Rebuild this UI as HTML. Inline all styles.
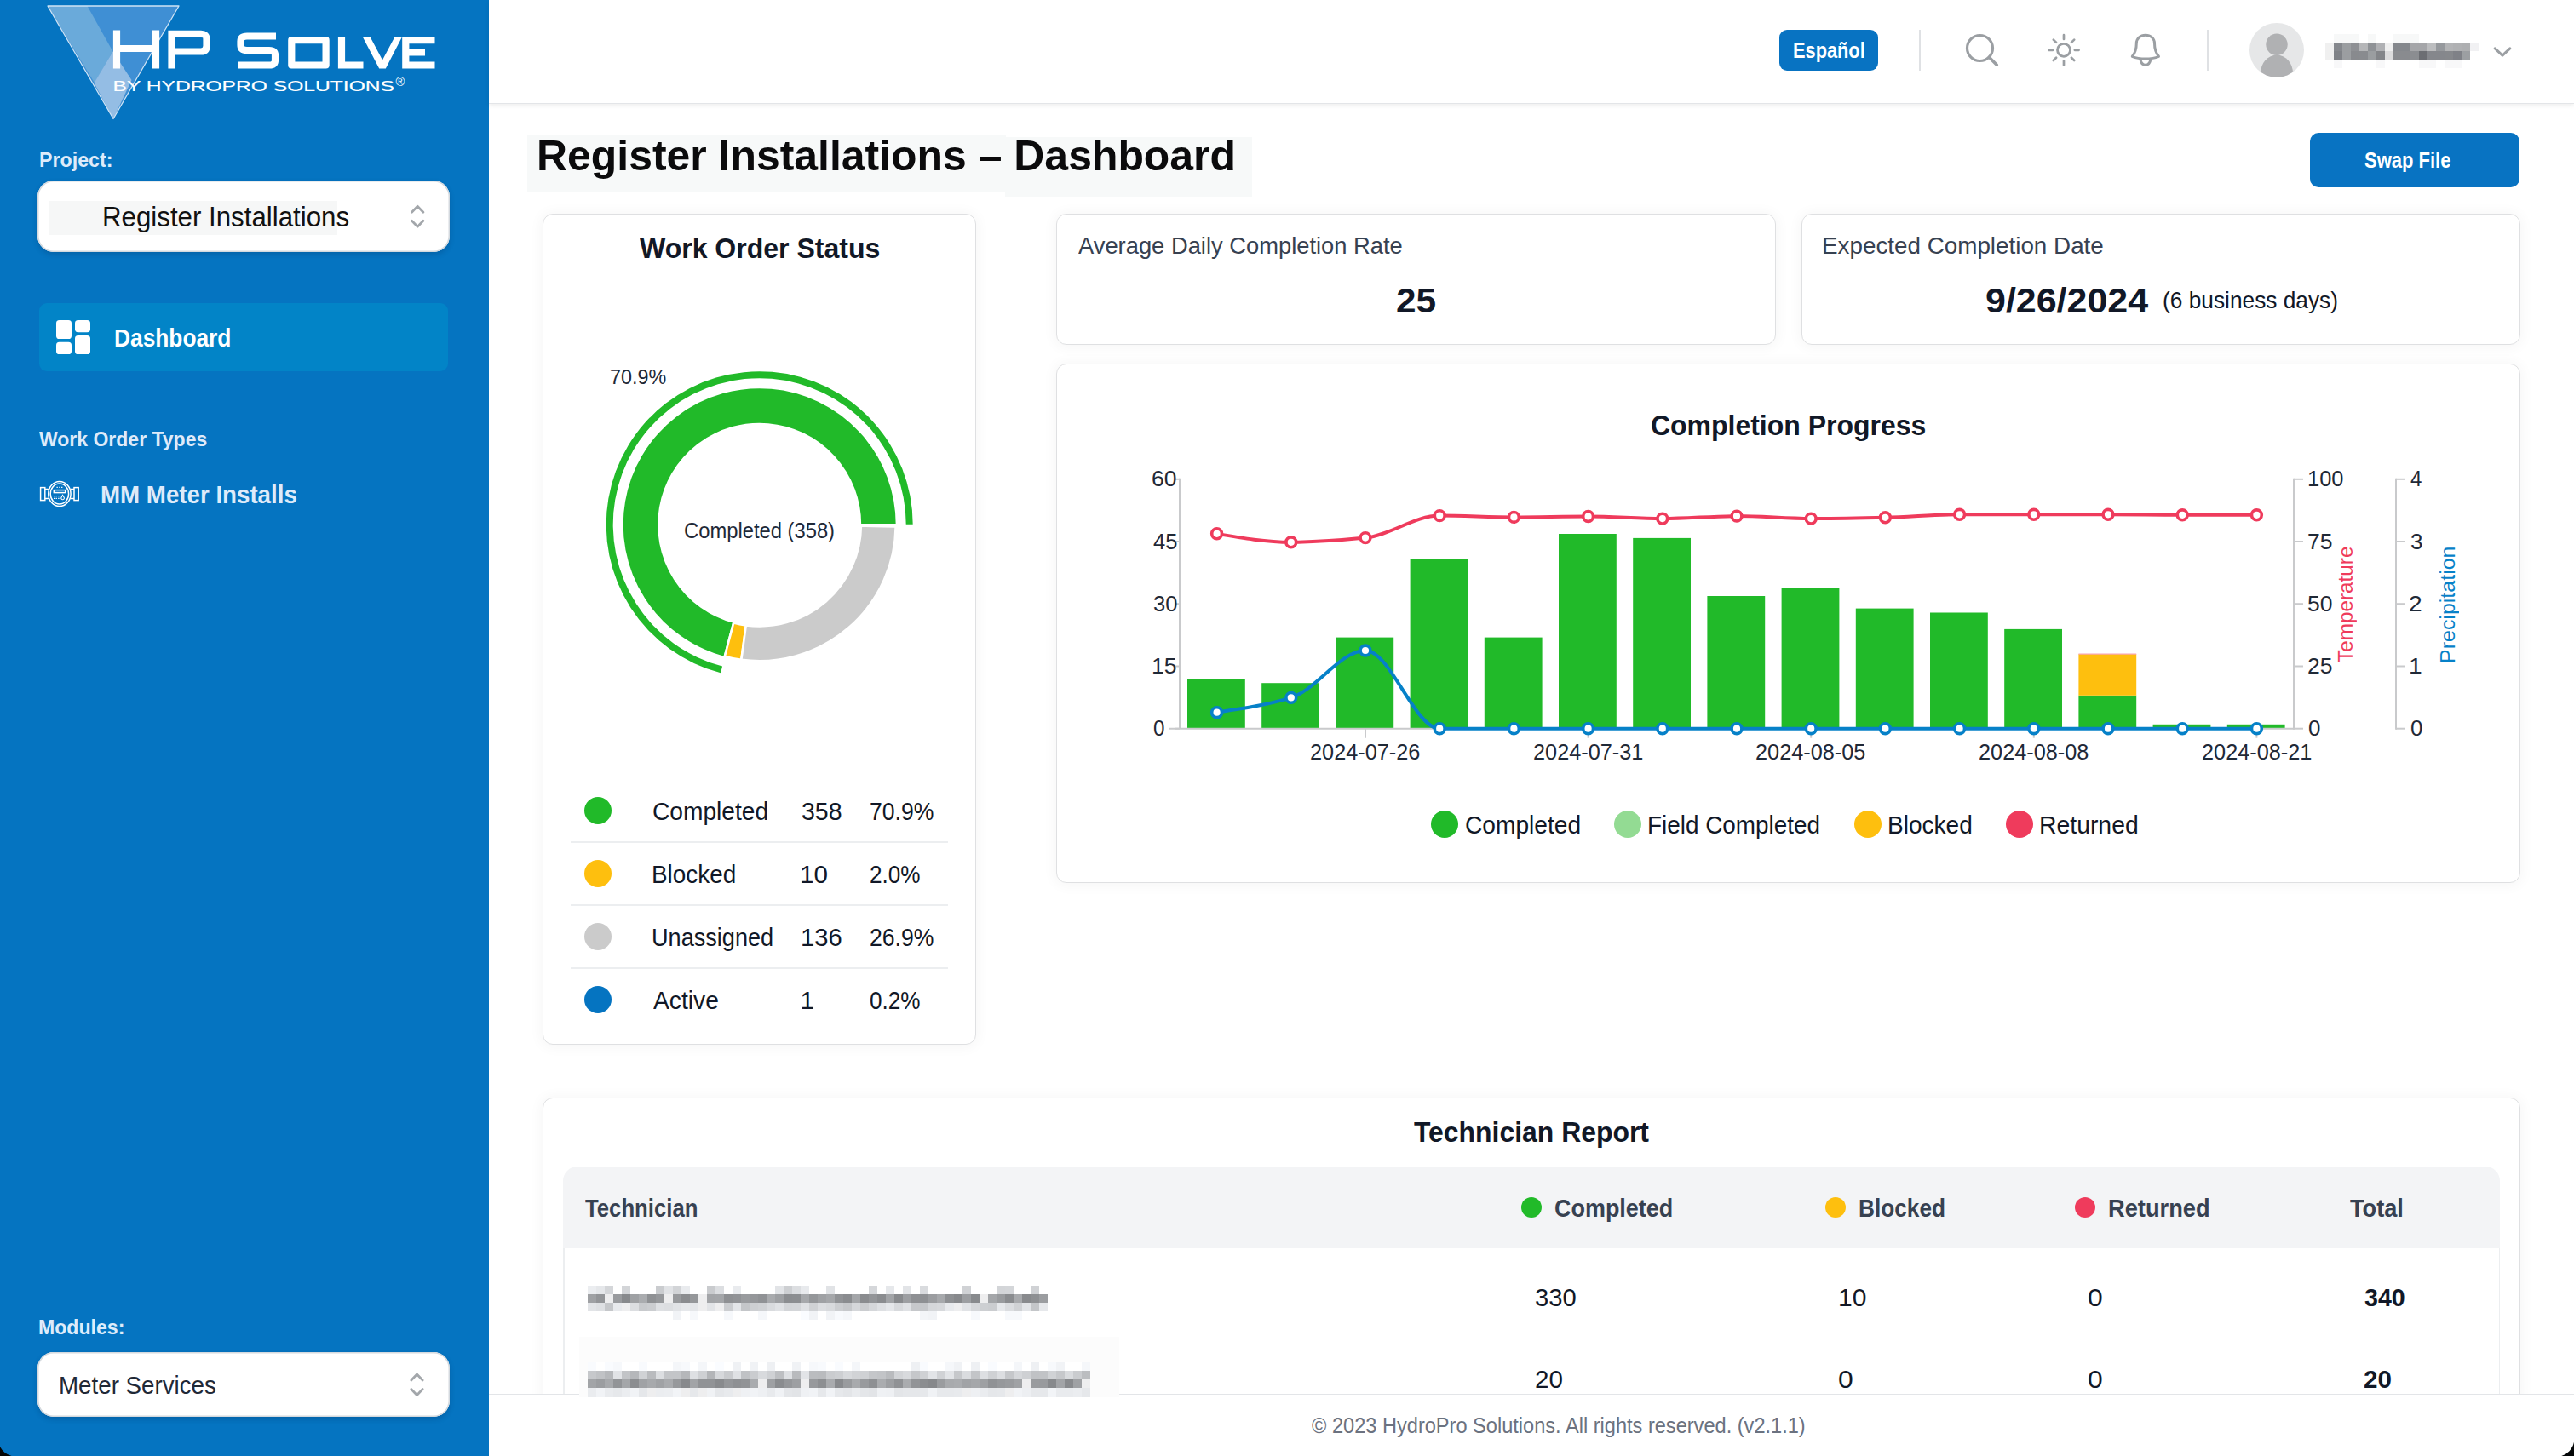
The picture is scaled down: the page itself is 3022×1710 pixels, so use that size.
<!DOCTYPE html>
<html lang="en"><head><meta charset="utf-8"><title>Register Installations – Dashboard</title>
<style>
html,body{margin:0;padding:0}
html{width:3022px;height:1710px;overflow:hidden}
body{width:3022px;height:1710px;position:relative;overflow:hidden;background:#fff;font-family:"Liberation Sans",sans-serif}
.t{position:absolute;white-space:nowrap;line-height:1em;display:block;transform-origin:0 50%}
div{box-sizing:border-box}
i{display:block}
</style></head><body>
<div id="app" style="position:relative;width:3022px;height:1710px;overflow:hidden">
<aside style="position:absolute;left:0;top:0;width:574px;height:1710px;background:#0574c1"></aside><svg style="position:absolute;left:0;top:0" width="574" height="150" viewBox="0 0 574 150">
<polygon points="56,7 210,7 133,139.5" fill="#3f8fd4"/>
<polygon points="56,7 102.5,7 132.5,60.5 111,97.5" fill="#6aaada"/>
<polygon points="132.5,60.5 154.5,94 133,139.5 110.5,97.5" fill="#94bde4"/>
<polygon points="56,7 210,7 133,139.5" fill="none" stroke="#cfe3f5" stroke-width="1.3" stroke-linejoin="round"/>
<g fill="none" stroke="#fff" stroke-width="8.2" stroke-linecap="butt" stroke-linejoin="miter">
<path d="M137,35.5V80.5M183,35.5V80.5M137,57H183"/>
<path d="M201.5,80.5V39.8H236Q242.5,39.8 242.5,46V54Q242.5,60.5 236,60.5H201.5"/>
<path d="M324,42.5H290Q282.5,42.5 282.5,48.5V53Q282.5,59 290,59H316Q323,59 323,65V70.5Q323,76.5 316,76.5H279"/>
<path d="M342.3,47.2h40.3v29.3h-40.3z" stroke-linejoin="round"/>
<path d="M401,43V76.5H426.5"/>
<polygon points="425.6,43.1 434.4,43.1 449,70.5 463.6,43.1 472.2,43.1 452.8,80.6 445.2,80.6" fill="#fff" stroke="none"/>
<path d="M510.5,47.2H476.3V76.5H510.5M476.3,61.5H499"/>
</g>
<text x="132.5" y="106.6" font-family="Liberation Sans, sans-serif" font-size="16.6" fill="#fff" textLength="330.5" lengthAdjust="spacingAndGlyphs" stroke="#fff" stroke-width="0.15">BY HYDROPRO SOLUTIONS</text>
<text x="464.6" y="101" font-family="Liberation Sans, sans-serif" font-size="14.5" fill="#fff">®</text>
</svg><span class="t" style="left:45.86px;transform:scaleX(0.9448);top:176.47px;font-size:24.60px;font-weight:700;color:#deebfa;">Project:</span><div style="position:absolute;left:44px;top:212px;width:484px;height:84px;background:#fff;border-radius:19px;box-shadow:0 0 0 1.5px #d4d9de inset,0 3px 6px rgba(0,30,70,.2)"></div><div style="position:absolute;left:57px;top:236px;width:339px;height:40px;background:#f6f7f7"></div><span class="t" style="left:119.63px;transform:scaleX(0.9328);top:237.64px;font-size:33.50px;font-weight:400;color:#111;">Register Installations</span><svg style="position:absolute;left:474px;top:234px" width="32" height="40" viewBox="474 234 32 40"><path d="M483.5,249.2L490.2,242.2L496.9,249.2M483.5,259.2L490.2,266.2L496.9,259.2" fill="none" stroke="#a3a7ab" stroke-width="2.7" stroke-linecap="round" stroke-linejoin="round"/></svg><div style="position:absolute;left:46px;top:356px;width:480px;height:80px;background:#0284c7;border-radius:9px"></div><svg style="position:absolute;left:66px;top:376px" width="40" height="40" viewBox="0 0 40 40" fill="#fff"><rect x="0" y="0" width="18" height="22" rx="3.6"/><rect x="22" y="0" width="18" height="14.2" rx="3.6"/><rect x="0" y="25.8" width="18" height="14.2" rx="3.6"/><rect x="22" y="18" width="18" height="22" rx="3.6"/></svg><span class="t" style="left:133.75px;transform:scaleX(0.8770);top:381.60px;font-size:30.00px;font-weight:700;color:#fff;">Dashboard</span><span class="t" style="left:46.00px;transform:scaleX(0.9663);top:504.45px;font-size:23.80px;font-weight:700;color:#deebfa;">Work Order Types</span><svg style="position:absolute;left:44px;top:562px" width="52" height="36" viewBox="44 562 52 36" fill="none" stroke="#fff" stroke-width="1.5">
<ellipse cx="69.9" cy="580" rx="13.2" ry="14.6"/><ellipse cx="69.9" cy="580" rx="10.7" ry="11.9"/>
<rect x="47.6" y="572.6" width="5.2" height="15"/><path d="M52.8,574.6H57.2M52.8,585.6H57.2"/>
<rect x="87" y="572.6" width="5.2" height="15"/><path d="M87,574.6H82.6M87,585.6H82.6"/>
<rect x="63.3" y="575.6" width="13.4" height="3"/>
<path d="M63,582.6h1.3M65.6,582.6h1.3M68.2,582.6h1.3M63,585.4h1.3M65.6,585.4h1.3M68.2,585.4h1.3M66.5,572.3h1.3M69.3,572.3h1.3M72.1,572.3h1.3" stroke-width="1.3"/>
<path d="M73.6,581.4L75.3,584.4A1.8,1.8 0 1 1 71.9,584.4Z" stroke-width="1.1"/>
</svg><span class="t" style="left:118.26px;transform:scaleX(0.9387);top:566.03px;font-size:29.50px;font-weight:700;color:#deebfa;">MM Meter Installs</span><span class="t" style="left:45.24px;transform:scaleX(0.9554);top:1546.81px;font-size:24.20px;font-weight:700;color:#deebfa;">Modules:</span><div style="position:absolute;left:44px;top:1588px;width:484px;height:76px;background:#fff;border-radius:19px;box-shadow:0 0 0 1.5px #d4d9de inset,0 3px 6px rgba(0,30,70,.2)"></div><span class="t" style="left:69.09px;transform:scaleX(0.9561);top:1612.75px;font-size:29.00px;font-weight:400;color:#1f2937;">Meter Services</span><svg style="position:absolute;left:474px;top:1606px" width="32" height="40" viewBox="474 1606 32 40"><path d="M482.8,1621L489.5,1614L496.2,1621M482.8,1631.5L489.5,1638.5L496.2,1631.5" fill="none" stroke="#a3a7ab" stroke-width="2.7" stroke-linecap="round" stroke-linejoin="round"/></svg><div style="position:absolute;left:574px;top:0px;width:2448px;height:122px;background:#fff;border-bottom:1.5px solid #e3e5e8;box-shadow:0 2px 5px rgba(0,0,0,.07)"></div><div style="position:absolute;left:2089px;top:35px;width:116px;height:47.5px;background:#0873c2;border-radius:9px"></div><span class="t" style="left:2104.73px;transform:scaleX(0.8710);top:47.04px;font-size:25.00px;font-weight:700;color:#fff;">Español</span><div style="position:absolute;left:2253px;top:35px;width:2px;height:47.5px;background:#dfe1e4"></div><div style="position:absolute;left:2591px;top:35px;width:2px;height:47.5px;background:#dfe1e4"></div><svg style="position:absolute;left:2290px;top:30px" width="270" height="60" viewBox="2290 30 270 60" fill="none" stroke="#9b9fa3" stroke-width="3.2" stroke-linecap="round" stroke-linejoin="round">
<circle cx="2324.5" cy="56.5" r="15"/><path d="M2335.6,67.4L2344.3,76.2" stroke-width="3.6"/>
<circle cx="2423" cy="58.8" r="7.5" stroke-width="2.8"/>
<path stroke-width="2.7" d="M2423,41.2V46M2423,71.6V76.4M2405.4,58.8H2410.2M2435.8,58.8H2440.6M2410.8,46.6L2414.1,49.9M2431.9,67.7L2435.2,71M2435.2,46.6L2431.9,49.9M2414.1,67.7L2410.8,71"/>
<path stroke-width="3" d="M2503.3,66.3C2507.5,61.5 2508.3,56.5 2508.3,51C2508.3,45 2512.9,41.2 2518.9,41.2C2524.9,41.2 2529.5,45 2529.5,51C2529.5,56.5 2530.3,61.5 2534.5,66.3C2529.5,68.4 2524,69 2518.9,69C2513.8,69 2508.3,68.4 2503.3,66.3Z"/>
<path stroke-width="3" d="M2512.9,69.5C2513.5,74 2515.8,76.3 2518.9,76.3C2522,76.3 2524.3,74 2524.9,69.5"/>
</svg><svg style="position:absolute;left:2640px;top:26px" width="66" height="66" viewBox="2640 26 66 66">
<defs><clipPath id="av"><circle cx="2673" cy="58.9" r="32"/></clipPath></defs>
<circle cx="2673" cy="58.9" r="32" fill="#e6e7e8"/>
<g clip-path="url(#av)" fill="#b0b1b3"><circle cx="2673" cy="52.3" r="12.7"/><ellipse cx="2673" cy="86" rx="19" ry="21.5"/></g>
</svg><svg style="position:absolute;left:2730px;top:38px" width="182" height="44" viewBox="2730 38 182 44" shape-rendering="crispEdges"><rect x="2730.3" y="49.8" width="10.1" height="10.1" fill="#f0f0f0"/><rect x="2740.3" y="49.8" width="10.1" height="10.1" fill="#85888d"/><rect x="2750.3" y="49.8" width="10.1" height="10.1" fill="#9b9ea1"/><rect x="2760.3" y="49.8" width="10.1" height="10.1" fill="#8e9094"/><rect x="2770.3" y="49.8" width="10.1" height="10.1" fill="#b5b6b8"/><rect x="2780.2" y="49.8" width="10.1" height="10.1" fill="#8f9296"/><rect x="2790.2" y="49.8" width="10.1" height="10.1" fill="#b0b1b4"/><rect x="2800.2" y="49.8" width="10.1" height="10.1" fill="#efefef"/><rect x="2810.2" y="49.8" width="10.1" height="10.1" fill="#85888d"/><rect x="2820.2" y="49.8" width="10.1" height="10.1" fill="#85888d"/><rect x="2830.2" y="49.8" width="10.1" height="10.1" fill="#a5a6a9"/><rect x="2840.2" y="49.8" width="10.1" height="10.1" fill="#a5a6a9"/><rect x="2850.2" y="49.8" width="10.1" height="10.1" fill="#bcbdbf"/><rect x="2860.2" y="49.8" width="10.1" height="10.1" fill="#96999d"/><rect x="2870.2" y="49.8" width="10.1" height="10.1" fill="#b3b4b6"/><rect x="2880.2" y="49.8" width="10.1" height="10.1" fill="#b0b1b3"/><rect x="2890.1" y="49.8" width="10.1" height="10.1" fill="#aeafb1"/><rect x="2900.1" y="49.8" width="10.1" height="10.1" fill="#f1f1f3"/><rect x="2730.3" y="59.8" width="10.1" height="10.1" fill="#f0f0f0"/><rect x="2740.3" y="59.8" width="10.1" height="10.1" fill="#7f8287"/><rect x="2750.3" y="59.8" width="10.1" height="10.1" fill="#9b9ea1"/><rect x="2760.3" y="59.8" width="10.1" height="10.1" fill="#888a8e"/><rect x="2770.3" y="59.8" width="10.1" height="10.1" fill="#898b8f"/><rect x="2780.2" y="59.8" width="10.1" height="10.1" fill="#9a9da0"/><rect x="2790.2" y="59.8" width="10.1" height="10.1" fill="#838589"/><rect x="2800.2" y="59.8" width="10.1" height="10.1" fill="#dcdcdd"/><rect x="2810.2" y="59.8" width="10.1" height="10.1" fill="#898b8f"/><rect x="2820.2" y="59.8" width="10.1" height="10.1" fill="#898b8f"/><rect x="2830.2" y="59.8" width="10.1" height="10.1" fill="#8b8d91"/><rect x="2840.2" y="59.8" width="10.1" height="10.1" fill="#6c6e73"/><rect x="2850.2" y="59.8" width="10.1" height="10.1" fill="#85878c"/><rect x="2860.2" y="59.8" width="10.1" height="10.1" fill="#85878c"/><rect x="2870.2" y="59.8" width="10.1" height="10.1" fill="#86888c"/><rect x="2880.2" y="59.8" width="10.1" height="10.1" fill="#7f8187"/><rect x="2890.1" y="59.8" width="10.1" height="10.1" fill="#9c9fa2"/><rect x="2740.3" y="39.8" width="10.1" height="10.1" fill="#f7f8f8"/><rect x="2750.3" y="39.8" width="10.1" height="10.1" fill="#f7f8f8"/><rect x="2760.3" y="39.8" width="10.1" height="10.1" fill="#f7f8f8"/><rect x="2780.2" y="39.8" width="10.1" height="10.1" fill="#f7f8f8"/><rect x="2810.2" y="39.8" width="10.1" height="10.1" fill="#f7f8f8"/><rect x="2820.2" y="39.8" width="10.1" height="10.1" fill="#f7f8f8"/><rect x="2830.2" y="39.8" width="10.1" height="10.1" fill="#f7f8f8"/><rect x="2740.3" y="69.8" width="10.1" height="10.1" fill="#f8f8f9"/><rect x="2790.2" y="69.8" width="10.1" height="10.1" fill="#f8f8f9"/><rect x="2840.2" y="69.8" width="10.1" height="10.1" fill="#f8f8f9"/><rect x="2850.2" y="69.8" width="10.1" height="10.1" fill="#f8f8f9"/><rect x="2870.2" y="69.8" width="10.1" height="10.1" fill="#f8f8f9"/><rect x="2880.2" y="69.8" width="10.1" height="10.1" fill="#f8f8f9"/></svg><svg style="position:absolute;left:2920px;top:48px" width="36" height="26" viewBox="2920 48 36 26"><path d="M2929.2,56.8L2938,65.2L2946.8,56.8" fill="none" stroke="#9b9fa3" stroke-width="3" stroke-linecap="round" stroke-linejoin="round"/></svg><div style="position:absolute;left:619px;top:158px;width:562px;height:66.5px;background:#f7f9f9"></div><div style="position:absolute;left:1180px;top:160.5px;width:290px;height:70.0px;background:#f7f9f9"></div><span class="t" style="left:629.51px;transform:scaleX(0.9983);top:157.67px;font-size:50.00px;font-weight:700;color:#0b0b0c;">Register Installations – Dashboard</span><div style="position:absolute;left:2712px;top:156px;width:246px;height:63.5px;background:#0873c2;border-radius:10px"></div><span class="t" style="left:2776.20px;transform:scaleX(0.8626);top:175.71px;font-size:25.50px;font-weight:700;color:#fff;">Swap File</span><div style="position:absolute;left:637px;top:251px;width:509px;height:976px;background:#fff;border:1px solid #dfe0e2;border-radius:12px;box-shadow:0 1px 15px 3px rgba(0,0,0,.036)"></div><span class="t" style="left:751.00px;transform:scaleX(0.9703);top:275.06px;font-size:33.00px;font-weight:700;color:#111827;">Work Order Status</span><svg style="position:absolute;left:690px;top:420px" width="400" height="400" viewBox="690 420 400 400"><path d="M1053.00,616.20A161.3,161.3 0 1 0 850.52,772.15L861.52,730.48A118.2,118.2 0 1 1 1009.90,616.20Z" fill="#21ba29" stroke="#fff" stroke-width="2.6" stroke-linejoin="round"/><path d="M850.85,770.90A160.0,160.0 0 0 0 870.36,774.77L875.80,734.34A119.2,119.2 0 0 1 861.27,731.45Z" fill="#febf0e" stroke="#fff" stroke-width="2.6" stroke-linejoin="round"/><path d="M870.36,774.77A160.0,160.0 0 0 0 1051.69,618.19L1010.89,617.68A119.2,119.2 0 0 1 875.80,734.34Z" fill="#cbcbcb" stroke="#fff" stroke-width="2.6" stroke-linejoin="round"/><path d="M1051.69,618.19A160.0,160.0 0 0 0 1051.70,616.20L1010.90,616.20A119.2,119.2 0 0 1 1010.89,617.68Z" fill="#0574c1" stroke="#fff" stroke-width="2.6" stroke-linejoin="round"/><path d="M1071.70,615.73A180,180 0 1 0 846.05,790.31L848.08,782.58A172,172 0 1 1 1063.70,615.75Z" fill="#21ba29"/></svg><span class="t" style="left:716.05px;transform:scaleX(0.9530);top:431.26px;font-size:24.50px;font-weight:400;color:#1f2937;">70.9%</span><span class="t" style="left:802.84px;transform:scaleX(0.9141);top:609.99px;font-size:26.00px;font-weight:400;color:#1f2937;">Completed (358)</span><div style="position:absolute;left:686px;top:936px;width:32px;height:32px;background:#21ba29;border-radius:50%"></div><span class="t" style="left:766.05px;transform:scaleX(0.9540);top:938.03px;font-size:29.50px;font-weight:400;color:#111827;">Completed</span><span class="t" style="left:940.53px;transform:scaleX(0.9663);top:938.03px;font-size:29.50px;font-weight:400;color:#111827;">358</span><span class="t" style="left:1020.90px;transform:scaleX(0.9027);top:938.03px;font-size:29.50px;font-weight:400;color:#111827;">70.9%</span><div style="position:absolute;left:670px;top:988px;width:443px;height:1.5px;background:#eceef0"></div><div style="position:absolute;left:686px;top:1010px;width:32px;height:32px;background:#febf0e;border-radius:50%"></div><span class="t" style="left:765.11px;transform:scaleX(0.9454);top:1012.03px;font-size:29.50px;font-weight:400;color:#111827;">Blocked</span><span class="t" style="left:939.49px;transform:scaleX(1.0031);top:1012.03px;font-size:29.50px;font-weight:400;color:#111827;">10</span><span class="t" style="left:1020.91px;transform:scaleX(0.8862);top:1012.03px;font-size:29.50px;font-weight:400;color:#111827;">2.0%</span><div style="position:absolute;left:670px;top:1062px;width:443px;height:1.5px;background:#eceef0"></div><div style="position:absolute;left:686px;top:1084px;width:32px;height:32px;background:#cbcbcb;border-radius:50%"></div><span class="t" style="left:765.16px;transform:scaleX(0.9187);top:1086.03px;font-size:29.50px;font-weight:400;color:#111827;">Unassigned</span><span class="t" style="left:939.53px;transform:scaleX(0.9869);top:1086.03px;font-size:29.50px;font-weight:400;color:#111827;">136</span><span class="t" style="left:1020.90px;transform:scaleX(0.9027);top:1086.03px;font-size:29.50px;font-weight:400;color:#111827;">26.9%</span><div style="position:absolute;left:670px;top:1136px;width:443px;height:1.5px;background:#eceef0"></div><div style="position:absolute;left:686px;top:1158px;width:32px;height:32px;background:#0574c1;border-radius:50%"></div><span class="t" style="left:767.00px;transform:scaleX(0.9571);top:1160.03px;font-size:29.50px;font-weight:400;color:#111827;">Active</span><span class="t" style="left:939.50px;top:1160.03px;font-size:29.50px;font-weight:400;color:#111827;">1</span><span class="t" style="left:1020.91px;transform:scaleX(0.8862);top:1160.03px;font-size:29.50px;font-weight:400;color:#111827;">0.2%</span><div style="position:absolute;left:1240px;top:251px;width:845px;height:154px;background:#fff;border:1px solid #dfe0e2;border-radius:12px;box-shadow:0 1px 15px 3px rgba(0,0,0,.036)"></div><div style="position:absolute;left:2115px;top:251px;width:844px;height:154px;background:#fff;border:1px solid #dfe0e2;border-radius:12px;box-shadow:0 1px 15px 3px rgba(0,0,0,.036)"></div><span class="t" style="left:1266.20px;transform:scaleX(0.9590);top:273.87px;font-size:28.50px;font-weight:400;color:#374151;">Average Daily Completion Rate</span><span class="t" style="left:1638.70px;transform:scaleX(1.0454);top:333.01px;font-size:40.50px;font-weight:700;color:#111827;">25</span><span class="t" style="left:2138.55px;transform:scaleX(0.9757);top:273.87px;font-size:28.50px;font-weight:400;color:#374151;">Expected Completion Date</span><span class="t" style="left:2330.64px;transform:scaleX(1.0604);top:333.01px;font-size:40.50px;font-weight:700;color:#111827;">9/26/2024</span><span class="t" style="left:2538.78px;transform:scaleX(0.9223);top:338.37px;font-size:28.50px;font-weight:400;color:#111827;">(6 business days)</span><div style="position:absolute;left:1240px;top:427px;width:1719px;height:610px;background:#fff;border:1px solid #dfe0e2;border-radius:12px;box-shadow:0 1px 15px 3px rgba(0,0,0,.036)"></div><span class="t" style="left:1938.23px;transform:scaleX(0.9687);top:483.06px;font-size:33.00px;font-weight:700;color:#111827;">Completion Progress</span><svg style="position:absolute;left:1300px;top:540px" width="1600" height="380" viewBox="1300 540 1600 380"><rect x="1394.0" y="797.3" width="67.8" height="58.4" fill="#21ba29"/><rect x="1481.2" y="802.2" width="67.8" height="53.5" fill="#21ba29"/><rect x="1568.4" y="748.6" width="67.8" height="107.1" fill="#21ba29"/><rect x="1655.6" y="656.2" width="67.8" height="199.5" fill="#21ba29"/><rect x="1742.8" y="748.6" width="67.8" height="107.1" fill="#21ba29"/><rect x="1830.0" y="627.0" width="67.8" height="228.7" fill="#21ba29"/><rect x="1917.2" y="631.9" width="67.8" height="223.8" fill="#21ba29"/><rect x="2004.4" y="700.0" width="67.8" height="155.7" fill="#21ba29"/><rect x="2091.6" y="690.3" width="67.8" height="165.4" fill="#21ba29"/><rect x="2178.8" y="714.6" width="67.8" height="141.1" fill="#21ba29"/><rect x="2266.0" y="719.5" width="67.8" height="136.2" fill="#21ba29"/><rect x="2353.2" y="738.9" width="67.8" height="116.8" fill="#21ba29"/><rect x="2440.4" y="816.8" width="67.8" height="38.9" fill="#21ba29"/><rect x="2440.4" y="768.1" width="67.8" height="48.7" fill="#febf0e"/><rect x="2440.4" y="767.5" width="67.8" height="1.2" fill="#f9a3b2"/><rect x="2527.6" y="850.8" width="67.8" height="4.9" fill="#21ba29"/><rect x="2614.8" y="850.8" width="67.8" height="4.9" fill="#21ba29"/><g stroke="#c9cacc" stroke-width="2" fill="none"><path d="M1385.0,561.8V855.7M1373.0,855.7H2693"/><path d="M1380.0,855.7H1385.0"/><path d="M2693,855.7H2704"/><path d="M2813,855.7H2824"/><path d="M1380.0,782.5H1385.0"/><path d="M2693,782.5H2704"/><path d="M2813,782.5H2824"/><path d="M1380.0,709.2H1385.0"/><path d="M2693,709.2H2704"/><path d="M2813,709.2H2824"/><path d="M1380.0,636.0H1385.0"/><path d="M2693,636.0H2704"/><path d="M2813,636.0H2824"/><path d="M1380.0,562.8H1385.0"/><path d="M2693,562.8H2704"/><path d="M2813,562.8H2824"/><path d="M2693,561.8V856.7M2813,561.8V856.7"/><path d="M1603.0,855.7V866.7"/><path d="M1864.6,855.7V866.7"/><path d="M2126.2,855.7V866.7"/><path d="M2387.8,855.7V866.7"/><path d="M2649.4,855.7V866.7"/></g><path d="M1428.6,626.8C1457.7,631.8 1486.7,636.8 1515.8,636.8C1544.9,636.8 1573.9,634.5 1603.0,631.6C1632.1,628.7 1661.1,605.6 1690.2,605.6C1719.3,605.6 1748.3,607.4 1777.4,607.4C1806.5,607.4 1835.5,606.5 1864.6,606.5C1893.7,606.5 1922.7,609.1 1951.8,609.1C1980.9,609.1 2009.9,606.1 2039.0,606.1C2068.1,606.1 2097.1,609.1 2126.2,609.1C2155.3,609.1 2184.3,608.4 2213.4,607.8C2242.5,607.2 2271.5,604.3 2300.6,604.3C2329.7,604.3 2358.7,604.3 2387.8,604.3C2416.9,604.3 2445.9,604.3 2475.0,604.3C2504.1,604.3 2533.1,604.8 2562.2,604.8C2591.3,604.8 2620.3,604.8 2649.4,604.8" fill="none" stroke="#ef3b5c" stroke-width="4" stroke-linejoin="round"/><circle cx="1428.6" cy="626.8" r="5.9" fill="#fff" stroke="#ef3b5c" stroke-width="3.6"/><circle cx="1515.8" cy="636.8" r="5.9" fill="#fff" stroke="#ef3b5c" stroke-width="3.6"/><circle cx="1603.0" cy="631.6" r="5.9" fill="#fff" stroke="#ef3b5c" stroke-width="3.6"/><circle cx="1690.2" cy="605.6" r="5.9" fill="#fff" stroke="#ef3b5c" stroke-width="3.6"/><circle cx="1777.4" cy="607.4" r="5.9" fill="#fff" stroke="#ef3b5c" stroke-width="3.6"/><circle cx="1864.6" cy="606.5" r="5.9" fill="#fff" stroke="#ef3b5c" stroke-width="3.6"/><circle cx="1951.8" cy="609.1" r="5.9" fill="#fff" stroke="#ef3b5c" stroke-width="3.6"/><circle cx="2039.0" cy="606.1" r="5.9" fill="#fff" stroke="#ef3b5c" stroke-width="3.6"/><circle cx="2126.2" cy="609.1" r="5.9" fill="#fff" stroke="#ef3b5c" stroke-width="3.6"/><circle cx="2213.4" cy="607.8" r="5.9" fill="#fff" stroke="#ef3b5c" stroke-width="3.6"/><circle cx="2300.6" cy="604.3" r="5.9" fill="#fff" stroke="#ef3b5c" stroke-width="3.6"/><circle cx="2387.8" cy="604.3" r="5.9" fill="#fff" stroke="#ef3b5c" stroke-width="3.6"/><circle cx="2475.0" cy="604.3" r="5.9" fill="#fff" stroke="#ef3b5c" stroke-width="3.6"/><circle cx="2562.2" cy="604.8" r="5.9" fill="#fff" stroke="#ef3b5c" stroke-width="3.6"/><circle cx="2649.4" cy="604.8" r="5.9" fill="#fff" stroke="#ef3b5c" stroke-width="3.6"/><path d="M1428.6,836.7C1457.7,832.4 1486.7,828.2 1515.8,819.4C1544.9,810.6 1573.9,764.0 1603.0,764.0C1632.1,764.0 1661.1,855.7 1690.2,855.7C1719.3,855.7 1748.3,855.7 1777.4,855.7C1806.5,855.7 1835.5,855.7 1864.6,855.7C1893.7,855.7 1922.7,855.7 1951.8,855.7C1980.9,855.7 2009.9,855.7 2039.0,855.7C2068.1,855.7 2097.1,855.7 2126.2,855.7C2155.3,855.7 2184.3,855.7 2213.4,855.7C2242.5,855.7 2271.5,855.7 2300.6,855.7C2329.7,855.7 2358.7,855.7 2387.8,855.7C2416.9,855.7 2445.9,855.7 2475.0,855.7C2504.1,855.7 2533.1,855.7 2562.2,855.7C2591.3,855.7 2620.3,855.7 2649.4,855.7" fill="none" stroke="#0681c8" stroke-width="4" stroke-linejoin="round"/><circle cx="1428.6" cy="836.7" r="5.9" fill="#fff" stroke="#0681c8" stroke-width="3.6"/><circle cx="1515.8" cy="819.4" r="5.9" fill="#fff" stroke="#0681c8" stroke-width="3.6"/><circle cx="1603.0" cy="764.0" r="5.9" fill="#fff" stroke="#0681c8" stroke-width="3.6"/><circle cx="1690.2" cy="855.7" r="5.9" fill="#fff" stroke="#0681c8" stroke-width="3.6"/><circle cx="1777.4" cy="855.7" r="5.9" fill="#fff" stroke="#0681c8" stroke-width="3.6"/><circle cx="1864.6" cy="855.7" r="5.9" fill="#fff" stroke="#0681c8" stroke-width="3.6"/><circle cx="1951.8" cy="855.7" r="5.9" fill="#fff" stroke="#0681c8" stroke-width="3.6"/><circle cx="2039.0" cy="855.7" r="5.9" fill="#fff" stroke="#0681c8" stroke-width="3.6"/><circle cx="2126.2" cy="855.7" r="5.9" fill="#fff" stroke="#0681c8" stroke-width="3.6"/><circle cx="2213.4" cy="855.7" r="5.9" fill="#fff" stroke="#0681c8" stroke-width="3.6"/><circle cx="2300.6" cy="855.7" r="5.9" fill="#fff" stroke="#0681c8" stroke-width="3.6"/><circle cx="2387.8" cy="855.7" r="5.9" fill="#fff" stroke="#0681c8" stroke-width="3.6"/><circle cx="2475.0" cy="855.7" r="5.9" fill="#fff" stroke="#0681c8" stroke-width="3.6"/><circle cx="2562.2" cy="855.7" r="5.9" fill="#fff" stroke="#0681c8" stroke-width="3.6"/><circle cx="2649.4" cy="855.7" r="5.9" fill="#fff" stroke="#0681c8" stroke-width="3.6"/></svg><span class="t" style="left:1353.50px;transform:scaleX(0.9692);top:843.24px;font-size:25.00px;font-weight:400;color:#1f2937;">0</span><span class="t" style="left:1352.44px;transform:scaleX(1.0616);top:770.01px;font-size:25.00px;font-weight:400;color:#1f2937;">15</span><span class="t" style="left:1353.50px;transform:scaleX(1.0222);top:696.79px;font-size:25.00px;font-weight:400;color:#1f2937;">30</span><span class="t" style="left:1353.50px;transform:scaleX(1.0222);top:623.56px;font-size:25.00px;font-weight:400;color:#1f2937;">45</span><span class="t" style="left:1352.44px;transform:scaleX(1.0616);top:550.34px;font-size:25.00px;font-weight:400;color:#1f2937;">60</span><span class="t" style="left:2710.00px;transform:scaleX(1.0385);top:843.24px;font-size:25.00px;font-weight:400;color:#1f2937;">0</span><span class="t" style="left:2708.94px;transform:scaleX(1.0616);top:770.01px;font-size:25.00px;font-weight:400;color:#1f2937;">25</span><span class="t" style="left:2708.94px;transform:scaleX(1.0616);top:696.79px;font-size:25.00px;font-weight:400;color:#1f2937;">50</span><span class="t" style="left:2708.94px;transform:scaleX(1.0616);top:623.56px;font-size:25.00px;font-weight:400;color:#1f2937;">75</span><span class="t" style="left:2708.98px;transform:scaleX(1.0174);top:550.34px;font-size:25.00px;font-weight:400;color:#1f2937;">100</span><span class="t" style="left:2829.50px;transform:scaleX(1.0385);top:843.24px;font-size:25.00px;font-weight:400;color:#1f2937;">0</span><span class="t" style="left:2828.38px;transform:scaleX(1.1250);top:770.01px;font-size:25.00px;font-weight:400;color:#1f2937;">1</span><span class="t" style="left:2828.38px;transform:scaleX(1.1250);top:696.79px;font-size:25.00px;font-weight:400;color:#1f2937;">2</span><span class="t" style="left:2829.50px;transform:scaleX(1.0385);top:623.56px;font-size:25.00px;font-weight:400;color:#1f2937;">3</span><span class="t" style="left:2829.50px;transform:scaleX(0.9643);top:550.34px;font-size:25.00px;font-weight:400;color:#1f2937;">4</span><span class="t" style="left:1538.24px;transform:scaleX(1.0121);top:871.44px;font-size:25.00px;font-weight:400;color:#1f2937;">2024-07-26</span><span class="t" style="left:1799.84px;transform:scaleX(1.0121);top:871.44px;font-size:25.00px;font-weight:400;color:#1f2937;">2024-07-31</span><span class="t" style="left:2061.44px;transform:scaleX(1.0121);top:871.44px;font-size:25.00px;font-weight:400;color:#1f2937;">2024-08-05</span><span class="t" style="left:2323.04px;transform:scaleX(1.0121);top:871.44px;font-size:25.00px;font-weight:400;color:#1f2937;">2024-08-08</span><span class="t" style="left:2584.64px;transform:scaleX(1.0121);top:871.44px;font-size:25.00px;font-weight:400;color:#1f2937;">2024-08-21</span><div style="position:absolute;left:2762.6px;top:709.7px;width:0;height:0;transform:rotate(-90deg)"><span class="t" style="left:-67.70px;transform:scaleX(1.0429);top:-19.73px;font-size:23.30px;font-weight:400;color:#ef3b5c;">Temperature</span></div><div style="position:absolute;left:2883.2px;top:709.7px;width:0;height:0;transform:rotate(-90deg)"><span class="t" style="left:-68.77px;transform:scaleX(1.0725);top:-19.73px;font-size:23.30px;font-weight:400;color:#0681c8;">Precipitation</span></div><div style="position:absolute;left:1680px;top:952.2px;width:32px;height:32.0px;background:#21ba29;border-radius:50%"></div><span class="t" style="left:1719.65px;transform:scaleX(0.9540);top:953.73px;font-size:29.50px;font-weight:400;color:#111827;">Completed</span><div style="position:absolute;left:1895px;top:952.2px;width:32px;height:32.0px;background:#93db93;border-radius:50%"></div><span class="t" style="left:1934.21px;transform:scaleX(0.9452);top:953.73px;font-size:29.50px;font-weight:400;color:#111827;">Field Completed</span><div style="position:absolute;left:2176.6px;top:952.2px;width:32.0px;height:32.0px;background:#febf0e;border-radius:50%"></div><span class="t" style="left:2215.80px;transform:scaleX(0.9503);top:953.73px;font-size:29.50px;font-weight:400;color:#111827;">Blocked</span><div style="position:absolute;left:2354.9px;top:952.2px;width:32.0px;height:32.0px;background:#ef3b5c;border-radius:50%"></div><span class="t" style="left:2394.48px;transform:scaleX(0.9614);top:953.73px;font-size:29.50px;font-weight:400;color:#111827;">Returned</span><div style="position:absolute;left:637px;top:1289px;width:2322px;height:471px;background:#fff;border:1px solid #dfe0e2;border-radius:12px;box-shadow:0 1px 15px 3px rgba(0,0,0,.036)"></div><span class="t" style="left:1660.00px;transform:scaleX(0.9669);top:1313.06px;font-size:33.00px;font-weight:700;color:#111827;">Technician Report</span><div style="position:absolute;left:661px;top:1369.5px;width:2274px;height:96.5px;background:#f3f4f6;border-radius:17px 17px 0 0"></div><div style="position:absolute;left:661px;top:1466px;width:1.5px;height:234px;background:#eceef0"></div><div style="position:absolute;left:2933.5px;top:1466px;width:1.5px;height:234px;background:#eceef0"></div><span class="t" style="left:687.00px;transform:scaleX(0.8573);top:1404.20px;font-size:30.00px;font-weight:700;color:#374151;">Technician</span><div style="position:absolute;left:1785.6px;top:1405.9px;width:24.0px;height:24.0px;background:#21ba29;border-radius:50%"></div><span class="t" style="left:1825.40px;transform:scaleX(0.8986);top:1404.20px;font-size:30.00px;font-weight:700;color:#374151;">Completed</span><div style="position:absolute;left:2142.5px;top:1405.9px;width:24.0px;height:24.0px;background:#febf0e;border-radius:50%"></div><span class="t" style="left:2181.55px;transform:scaleX(0.8741);top:1404.20px;font-size:30.00px;font-weight:700;color:#374151;">Blocked</span><div style="position:absolute;left:2435.8px;top:1405.9px;width:24.0px;height:24.0px;background:#ef3b5c;border-radius:50%"></div><span class="t" style="left:2474.78px;transform:scaleX(0.9085);top:1404.20px;font-size:30.00px;font-weight:700;color:#374151;">Returned</span><span class="t" style="left:2759.00px;transform:scaleX(0.9060);top:1404.20px;font-size:30.00px;font-weight:700;color:#374151;">Total</span><div style="position:absolute;left:662.5px;top:1570.5px;width:2271.0px;height:1.5px;background:#eceef0"></div><span class="t" style="left:1801.71px;transform:scaleX(0.9893);top:1509.43px;font-size:29.50px;font-weight:400;color:#111827;">330</span><span class="t" style="left:2158.16px;transform:scaleX(1.0195);top:1509.43px;font-size:29.50px;font-weight:400;color:#111827;">10</span><span class="t" style="left:2450.82px;transform:scaleX(1.0800);top:1509.43px;font-size:29.50px;font-weight:400;color:#111827;">0</span><span class="t" style="left:2776.00px;transform:scaleX(0.9690);top:1509.43px;font-size:29.50px;font-weight:700;color:#111827;">340</span><span class="t" style="left:1801.70px;transform:scaleX(1.0030);top:1605.43px;font-size:29.50px;font-weight:400;color:#111827;">20</span><span class="t" style="left:2157.62px;transform:scaleX(1.0800);top:1605.43px;font-size:29.50px;font-weight:400;color:#111827;">0</span><span class="t" style="left:2450.82px;transform:scaleX(1.0800);top:1605.43px;font-size:29.50px;font-weight:400;color:#111827;">0</span><span class="t" style="left:2775.00px;transform:scaleX(1.0030);top:1605.43px;font-size:29.50px;font-weight:700;color:#111827;">20</span><div style="position:absolute;left:574px;top:1636.5px;width:2448px;height:73.5px;background:#fff;border-top:1.5px solid #e3e5e8"></div><span class="t" style="left:1540.00px;transform:scaleX(0.9248);top:1661.61px;font-size:25.50px;font-weight:400;color:#6b7280;">© 2023 HydroPro Solutions. All rights reserved. (v2.1.1)</span><div style="position:absolute;left:680px;top:1570px;width:634px;height:70.5px;background:#fcfcfc"></div><div style="position:absolute;left:690.2px;top:1510.2px;width:540px;height:10.2px;background:linear-gradient(90deg,#ebedf0 0px 10px,#e5e7ea 10px 20px,#d4d6d9 20px 30px,#fff 30px 40px,#d3d5d8 40px 50px,#fff 50px 60px,#fff 60px 70px,#fff 70px 80px,#cacccf 80px 90px,#e1e3e6 90px 100px,#d2d4d7 100px 110px,#e9ebee 110px 120px,#fff 120px 130px,#fff 130px 140px,#c9cbce 140px 150px,#dcdee1 150px 160px,#fff 160px 170px,#e9ebee 170px 180px,#fff 180px 190px,#fff 190px 200px,#fff 200px 210px,#fff 210px 220px,#e2e4e7 220px 230px,#cdcfd2 230px 240px,#dcdee1 240px 250px,#e8eaed 250px 260px,#fff 260px 270px,#fff 270px 280px,#e1e3e6 280px 290px,#fff 290px 300px,#fff 300px 310px,#fff 310px 320px,#fff 320px 330px,#d5d7da 330px 340px,#fff 340px 350px,#e6e8eb 350px 360px,#fff 360px 370px,#e2e4e7 370px 380px,#fff 380px 390px,#d9dbde 390px 400px,#fff 400px 410px,#fff 410px 420px,#fff 420px 430px,#fff 430px 440px,#d0d2d5 440px 450px,#fff 450px 460px,#fff 460px 470px,#fff 470px 480px,#d3d5d8 480px 490px,#d4d6d9 490px 500px,#fff 500px 510px,#fff 510px 520px,#d0d2d5 520px 530px,#fff 530px 540px)"></div><div style="position:absolute;left:690.2px;top:1520px;width:540px;height:10.2px;background:linear-gradient(90deg,#9fa1a4 0px 10px,#939598 10px 20px,#eeeeef 20px 30px,#999b9e 30px 40px,#87898c 40px 50px,#9fa1a4 50px 60px,#aaacaf 60px 70px,#8f9194 70px 80px,#96989b 80px 90px,#eeeeef 90px 100px,#989a9d 100px 110px,#8a8c8f 110px 120px,#95979a 120px 130px,#eeeeef 130px 140px,#a3a5a8 140px 150px,#a4a6a9 150px 160px,#8e9093 160px 170px,#919396 170px 180px,#999b9e 180px 190px,#95979a 190px 200px,#909295 200px 210px,#a9abae 210px 220px,#9ea0a3 220px 230px,#8b8d90 230px 240px,#8c8e91 240px 250px,#a6a8ab 250px 260px,#95979a 260px 270px,#9fa1a4 270px 280px,#a5a7aa 280px 290px,#919396 290px 300px,#8a8c8f 300px 310px,#a4a6a9 310px 320px,#8a8c8f 320px 330px,#939598 330px 340px,#8a8c8f 340px 350px,#a2a4a7 350px 360px,#888a8d 360px 370px,#9d9fa2 370px 380px,#8e9093 380px 390px,#8e9093 390px 400px,#9b9da0 400px 410px,#a7a9ac 410px 420px,#8e9093 420px 430px,#87898c 430px 440px,#9c9ea1 440px 450px,#888a8d 450px 460px,#eeeeef 460px 470px,#a4a6a9 470px 480px,#999b9e 480px 490px,#8a8c8f 490px 500px,#a8aaad 500px 510px,#888a8d 510px 520px,#8e9093 520px 530px,#9b9da0 530px 540px)"></div><div style="position:absolute;left:690.2px;top:1530px;width:540px;height:10.2px;background:linear-gradient(90deg,#e2e4e7 0px 10px,#dee0e3 10px 20px,#c5c7ca 20px 30px,#e8eaed 30px 40px,#eeeeef 40px 50px,#dcdee1 50px 60px,#c8cacd 60px 70px,#cbcdd0 70px 80px,#dee0e3 80px 90px,#dcdee1 90px 100px,#e1e3e6 100px 110px,#e6e8eb 110px 120px,#e4e6e9 120px 130px,#eeeeef 130px 140px,#e2e4e7 140px 150px,#eeeeef 150px 160px,#cbcdd0 160px 170px,#e3e5e8 170px 180px,#c4c6c9 180px 190px,#cdcfd2 190px 200px,#d0d2d5 200px 210px,#d9dbde 210px 220px,#e0e2e5 220px 230px,#d3d5d8 230px 240px,#d4d6d9 240px 250px,#dfe1e4 250px 260px,#d0d2d5 260px 270px,#dcdee1 270px 280px,#d8dadd 280px 290px,#ccced1 290px 300px,#c6c8cb 300px 310px,#d5d7da 310px 320px,#cbcdd0 320px 330px,#d5d7da 330px 340px,#dee0e3 340px 350px,#e5e7ea 350px 360px,#d8dadd 360px 370px,#e0e2e5 370px 380px,#c6c8cb 380px 390px,#c6c8cb 390px 400px,#d5d7da 400px 410px,#d7d9dc 410px 420px,#e8eaed 420px 430px,#eeeeef 430px 440px,#e1e3e6 440px 450px,#d5d7da 450px 460px,#cdcfd2 460px 470px,#cbcdd0 470px 480px,#e6e8eb 480px 490px,#dbdde0 490px 500px,#d0d2d5 500px 510px,#e2e4e7 510px 520px,#c4c6c9 520px 530px,#e6e8eb 530px 540px)"></div><div style="position:absolute;left:690.2px;top:1540px;width:540px;height:10.2px;background:linear-gradient(90deg,#fff 0px 10px,#fff 10px 20px,#fff 20px 30px,#fff 30px 40px,#fff 40px 50px,#fff 50px 60px,#fff 60px 70px,#fff 70px 80px,#fff 80px 90px,#fff 90px 100px,#f1f3f6 100px 110px,#fff 110px 120px,#f6f8fb 120px 130px,#fff 130px 140px,#fff 140px 150px,#fff 150px 160px,#f6f8fb 160px 170px,#fff 170px 180px,#fff 180px 190px,#fff 190px 200px,#f5f7fa 200px 210px,#fff 210px 220px,#fff 220px 230px,#fff 230px 240px,#fff 240px 250px,#fafcff 250px 260px,#f1f3f6 260px 270px,#fff 270px 280px,#f1f3f6 280px 290px,#f8fafd 290px 300px,#f5f7fa 300px 310px,#fff 310px 320px,#fff 320px 330px,#fff 330px 340px,#fff 340px 350px,#fff 350px 360px,#fff 360px 370px,#fff 370px 380px,#fff 380px 390px,#f3f5f8 390px 400px,#f1f3f6 400px 410px,#fff 410px 420px,#fff 420px 430px,#fff 430px 440px,#fff 440px 450px,#f7f9fc 450px 460px,#fff 460px 470px,#fff 470px 480px,#fff 480px 490px,#f7f9fc 490px 500px,#f7f9fc 500px 510px,#fff 510px 520px,#fff 520px 530px,#fff 530px 540px)"></div><div style="position:absolute;left:690.2px;top:1600.3px;width:590px;height:10.2px;background:linear-gradient(90deg,#f9fbfe 0px 10px,#fff 10px 20px,#f9fbfe 20px 30px,#f6f8fb 30px 40px,#fff 40px 50px,#fff 50px 60px,#f8fafd 60px 70px,#fff 70px 80px,#fff 80px 90px,#fff 90px 100px,#f4f6f9 100px 110px,#f7f9fc 110px 120px,#fff 120px 130px,#f4f6f9 130px 140px,#fff 140px 150px,#fafcff 150px 160px,#fff 160px 170px,#eff1f4 170px 180px,#fff 180px 190px,#f0f2f5 190px 200px,#fff 200px 210px,#eef0f3 210px 220px,#fff 220px 230px,#fff 230px 240px,#f0f2f5 240px 250px,#fff 250px 260px,#f6f8fb 260px 270px,#f8fafd 270px 280px,#fff 280px 290px,#f9fbfe 290px 300px,#fff 300px 310px,#f4f6f9 310px 320px,#fff 320px 330px,#fff 330px 340px,#fff 340px 350px,#fff 350px 360px,#fff 360px 370px,#fff 370px 380px,#eef0f3 380px 390px,#f9fbfe 390px 400px,#fff 400px 410px,#fff 410px 420px,#f5f7fa 420px 430px,#f0f2f5 430px 440px,#fff 440px 450px,#eef0f3 450px 460px,#fff 460px 470px,#f9fbfe 470px 480px,#fff 480px 490px,#fff 490px 500px,#f4f6f9 500px 510px,#fff 510px 520px,#eef0f3 520px 530px,#fff 530px 540px,#f7f9fc 540px 550px,#f1f3f6 550px 560px,#fff 560px 570px,#fff 570px 580px,#f5f7fa 580px 590px)"></div><div style="position:absolute;left:690.2px;top:1610.3px;width:590px;height:10.2px;background:linear-gradient(90deg,#c6c8cb 0px 10px,#c0c2c5 10px 20px,#b6b8bb 20px 30px,#e1e3e6 30px 40px,#c2c4c7 40px 50px,#b5b7ba 50px 60px,#d0d2d5 60px 70px,#b9bbbe 70px 80px,#dcdee1 80px 90px,#c3c5c8 90px 100px,#c3c5c8 100px 110px,#b5b7ba 110px 120px,#dee0e3 120px 130px,#ced0d3 130px 140px,#b3b5b8 140px 150px,#d6d8db 150px 160px,#c9cbce 160px 170px,#dfe1e4 170px 180px,#c0c2c5 180px 190px,#cacccf 190px 200px,#d8dadd 200px 210px,#cfd1d4 210px 220px,#bdbfc2 220px 230px,#dee0e3 230px 240px,#b8babd 240px 250px,#e2e4e7 250px 260px,#babcbf 260px 270px,#b9bbbe 270px 280px,#cacccf 280px 290px,#cdcfd2 290px 300px,#d7d9dc 300px 310px,#d1d3d6 310px 320px,#cfd1d4 320px 330px,#c4c6c9 330px 340px,#c2c4c7 340px 350px,#b9bbbe 350px 360px,#d2d4d7 360px 370px,#d8dadd 370px 380px,#c5c7ca 380px 390px,#cfd1d4 390px 400px,#e2e4e7 400px 410px,#d0d2d5 410px 420px,#e2e4e7 420px 430px,#c6c8cb 430px 440px,#dadcdf 440px 450px,#c3c5c8 450px 460px,#dddfe2 460px 470px,#cfd1d4 470px 480px,#dcdee1 480px 490px,#c5c7ca 490px 500px,#d5d7da 500px 510px,#ced0d3 510px 520px,#c0c2c5 520px 530px,#c1c3c6 530px 540px,#d0d2d5 540px 550px,#c6c8cb 550px 560px,#d9dbde 560px 570px,#cacccf 570px 580px,#bbbdc0 580px 590px)"></div><div style="position:absolute;left:690.2px;top:1620.4px;width:590px;height:10.2px;background:linear-gradient(90deg,#a2a4a7 0px 10px,#9b9da0 10px 20px,#a7a9ac 20px 30px,#929497 30px 40px,#a4a6a9 40px 50px,#8b8d90 50px 60px,#a0a2a5 60px 70px,#a7a9ac 70px 80px,#a0a2a5 80px 90px,#a9abae 90px 100px,#97999c 100px 110px,#87898c 110px 120px,#a2a4a7 120px 130px,#919396 130px 140px,#919396 140px 150px,#888a8d 150px 160px,#949699 160px 170px,#8e9093 170px 180px,#919396 180px 190px,#a9abae 190px 200px,#eeeeef 200px 210px,#9ea0a3 210px 220px,#8a8c8f 220px 230px,#95979a 230px 240px,#9d9fa2 240px 250px,#eeeeef 250px 260px,#97999c 260px 270px,#8d8f92 270px 280px,#a9abae 280px 290px,#888a8d 290px 300px,#999b9e 300px 310px,#a8aaad 310px 320px,#989a9d 320px 330px,#8e9093 330px 340px,#aaacaf 340px 350px,#9d9fa2 350px 360px,#909295 360px 370px,#aaacaf 370px 380px,#929497 380px 390px,#8b8d90 390px 400px,#86888b 400px 410px,#9a9c9f 410px 420px,#a8aaad 420px 430px,#aaacaf 430px 440px,#a1a3a6 440px 450px,#a5a7aa 450px 460px,#9ea0a3 460px 470px,#909295 470px 480px,#96989b 480px 490px,#999b9e 490px 500px,#a0a2a5 500px 510px,#eeeeef 510px 520px,#999b9e 520px 530px,#989a9d 530px 540px,#87898c 540px 550px,#a2a4a7 550px 560px,#888a8d 560px 570px,#9fa1a4 570px 580px,#eeeeef 580px 590px)"></div><div style="position:absolute;left:690.2px;top:1630.4px;width:590px;height:10.2px;background:linear-gradient(90deg,#eaecef 0px 10px,#f1f3f6 10px 20px,#e9ebee 20px 30px,#e6e8eb 30px 40px,#ebedf0 40px 50px,#f1f3f6 50px 60px,#e5e7ea 60px 70px,#eeeeef 70px 80px,#ebedf0 80px 90px,#eceef1 90px 100px,#f2f4f7 100px 110px,#eeeeef 110px 120px,#e6e8eb 120px 130px,#eeeeef 130px 140px,#f0f2f5 140px 150px,#e5e7ea 150px 160px,#e8eaed 160px 170px,#eeeeef 170px 180px,#eff1f4 180px 190px,#f1f3f6 190px 200px,#eef0f3 200px 210px,#e8eaed 210px 220px,#f0f2f5 220px 230px,#e4e6e9 230px 240px,#e2e4e7 240px 250px,#eff1f4 250px 260px,#f1f3f6 260px 270px,#e6e8eb 270px 280px,#f1f3f6 280px 290px,#e6e8eb 290px 300px,#e3e5e8 300px 310px,#e9ebee 310px 320px,#e4e6e9 320px 330px,#e2e4e7 330px 340px,#eff1f4 340px 350px,#eef0f3 350px 360px,#e3e5e8 360px 370px,#e5e7ea 370px 380px,#e5e7ea 380px 390px,#e6e8eb 390px 400px,#f0f2f5 400px 410px,#e7e9ec 410px 420px,#e7e9ec 420px 430px,#e8eaed 430px 440px,#eeeeef 440px 450px,#eef0f3 450px 460px,#eaecef 460px 470px,#e5e7ea 470px 480px,#e6e8eb 480px 490px,#eeeeef 490px 500px,#f1f3f6 500px 510px,#edeff2 510px 520px,#e6e8eb 520px 530px,#e6e8eb 530px 540px,#f2f4f7 540px 550px,#e9ebee 550px 560px,#e9ebee 560px 570px,#ebedf0 570px 580px,#e6e8eb 580px 590px)"></div><svg style="position:absolute;left:0;top:1680px" width="3022" height="30" viewBox="0 1680 3022 30"><path d="M0,1711L0,1699.2A22.8,22.8 0 0 0 16.4,1710.6L16.4,1711Z" fill="#040607"/><path d="M3022,1711L3022,1693.8A21.7,21.7 0 0 1 3005.8,1710.4L3005.8,1711Z" fill="#040607"/></svg>
</div>
</body></html>
